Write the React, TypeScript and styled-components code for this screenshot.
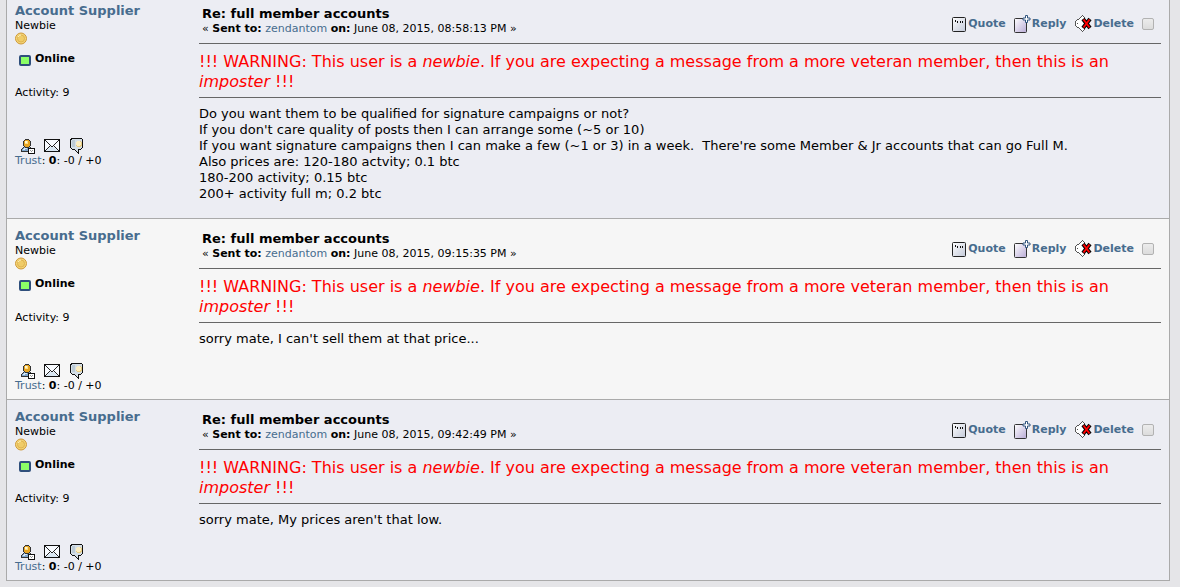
import React from 'react';
import styled, { createGlobalStyle } from 'styled-components';

const GlobalStyle = createGlobalStyle`
  body {
    margin: 0;
    background: #e5e5e8;
    color: #000;
    font-family: Verdana, "DejaVu Sans", sans-serif;
    font-size: 13px;
    line-height: 16px;
  }
`;

const Panel = styled.main`
  margin: 0 10px 6px 6px;
  border: solid #aaa;
  border-width: 0 1px;
`;

const Post = styled.article<{ $alt?: boolean }>`
  display: flex;
  padding: 8px 8px 7px;
  background: ${(p) => (p.$alt ? '#f6f6f6' : '#ecedf3')};
  border-bottom: 1px solid #aaa;
  &:first-child {
    padding-top: 2px;
  }
`;

const Poster = styled.aside`
  flex: 0 0 184px;
  display: flex;
  flex-direction: column;
  align-items: flex-start;
  padding-top: 1px;
  font-size: 11px;
  line-height: 13px;
`;

const Link = styled.a`
  color: #476c8e;
  text-decoration: none;
`;

const PosterName = styled(Link)`
  font-size: 13px;
  line-height: 16px;
  font-weight: bold;
`;

const Coin = styled.svg`
  display: block;
`;

const Status = styled.div`
  display: flex;
  align-items: flex-start;
  gap: 4px;
  margin-top: 7px;
  padding-left: 4px;
  font-weight: bold;
`;

const StatusLight = styled.span`
  box-sizing: border-box;
  width: 12px;
  height: 11px;
  margin-top: 3px;
  border: 2px solid #2f4f7c;
  border-radius: 2px;
  background: #8cff66;
`;

const Activity = styled.div`
  margin-top: 20px;
`;

const Contacts = styled.div`
  display: flex;
  align-items: center;
  gap: 9px;
  margin-top: 39px;
  padding-left: 6px;
  a,
  svg {
    display: block;
  }
`;

const Message = styled.section`
  flex: 1;
  min-width: 0;
`;

const Header = styled.header`
  display: flex;
  align-items: center;
  justify-content: space-between;
  height: 41px;
  padding: 0 7px 0 3px;
`;

const Title = styled.h2`
  margin: 0;
  font-size: 13px;
  line-height: 16px;
`;

const Sent = styled.div`
  font-size: 11px;
  line-height: 13px;
`;

const Heading = styled.div`
  padding-bottom: 5px;
`;

const Actions = styled.div`
  display: flex;
  align-items: center;
  padding-top: 2px;
`;

const Action = styled(Link)`
  display: flex;
  align-items: center;
  gap: 1px;
  margin-right: 8px;
  font-size: 11px;
  font-weight: bold;
  svg {
    display: block;
  }
`;

const Tick = styled.input`
  appearance: none;
  box-sizing: border-box;
  width: 12px;
  height: 12px;
  margin: 0;
  border: 1px solid #b2b2b2;
  border-radius: 2px;
  background: linear-gradient(#ececec, #dcdcdc);
`;

const Rule = styled.hr`
  height: 1px;
  margin: 0;
  border: 0;
  background: #666;
`;

const Warning = styled.p`
  margin: 8px 0 5px;
  color: #f00;
  font-size: 16px;
  line-height: 20px;
`;

const Body = styled.div`
  padding: 8px 0 9px;
  white-space: pre-wrap;
`;

const CoinIcon = () => (
  <Coin width="12" height="13" viewBox="0 0 12 13" aria-hidden="true">
    <circle cx="6" cy="6.500" r="5.500" fill="#f3d477" stroke="#cf9a3c" />
    <circle cx="6" cy="6.500" r="3.500" fill="#f0cc68" stroke="#e0b450" />
    <path d="M3 5Q4 3 6 3" fill="none" stroke="#fff3bd" />
  </Coin>
);

const ProfileIcon = () => (
  <svg width="14" height="16" viewBox="0 0 14 16" shapeRendering="crispEdges" aria-hidden="true">
    <path d="M4 1h4v1h1v1h1v5H9v1h1v1h1v1h1v3H0v-3h1v-1h1V9h1V8H2V3h1V2h1z" fill="#333" />
    <path d="M4 2h4v1h1v5H8v1H4V8H3V3h1z" fill="#e6a421" />
    <path d="M4 3h3v3H4z" fill="#ffdf86" />
    <path d="M4 3h2v2H4z" fill="#fff5cf" />
    <path d="M3 9h1v1h4V9h1v1h1v3H1v-2h1v-1h1z" fill="#7fa6cc" />
    <path d="M3 10h3v1H3zM2 11h2v1H2z" fill="#d6e7f5" />
    <path d="M7 10h7v6H7z" fill="#111" />
    <path d="M8 11h5v4H8z" fill="#fff" />
    <path d="M9 12h1v1H9zM11 12h1v1h-1zM10 13h1v1h-1z" fill="#999" />
  </svg>
);

const MailIcon = () => (
  <svg width="16" height="14" viewBox="0 0 16 14" aria-hidden="true">
    <rect x=".5" y=".5" width="15" height="12" fill="#f8fbff" stroke="#111" />
    <path d="M2 12h12l-4-4H6z" fill="#d8e6f2" />
    <path d="M1 1l7 7 7-7M1 12l5-5M15 12l-5-5" fill="none" stroke="#222" />
  </svg>
);

const ChatIcon = () => (
  <svg width="14" height="16" viewBox="0 0 14 16" shapeRendering="crispEdges" aria-hidden="true">
    <path d="M2 0h11v1h1v9h-1v1h-1v1h-2v4H9v-1H8v-1H7v-1H6v-1H3v-1H2v-1H1V1h1z" fill="#111" />
    <path d="M3 1h10v9h-1v1H9v3H8v-1H7v-1H6v-1H3v-1H2V2h1z" fill="#d5dfe7" />
    <path d="M3 2h3v7H3z" fill="#bccbd6" />
    <path d="M8 3h4v1h1v4h-1v1H8V8H7V4h1z" fill="#e8cd83" />
    <path d="M8 3h3v1h1v3h-1v1H8V7H7V4h1z" fill="#fbedc2" />
  </svg>
);

const QuoteIcon = () => (
  <svg width="16" height="18" viewBox="0 0 16 18" aria-hidden="true">
    <defs>
      <linearGradient id="quoteFill" x1="0" y1="0" x2="1" y2="1">
        <stop offset="0" stopColor="#fff" />
        <stop offset="1" stopColor="#c3c9d8" />
      </linearGradient>
    </defs>
    <rect x="1.500" y="2.500" width="13" height="14" rx="1" fill="url(#quoteFill)" stroke="#222" />
    <path d="M4 5h1v2H4zM6 6h1v2H6zM9 6h1v2H9zM11 6h1v2h-1z" fill="#111" shapeRendering="crispEdges" />
  </svg>
);

const ReplyIcon = () => (
  <svg width="17" height="18" viewBox="0 0 17 18" aria-hidden="true">
    <defs>
      <linearGradient id="replyFill" x1="0" y1="0" x2="1" y2="1">
        <stop offset="0" stopColor="#fff" />
        <stop offset="1" stopColor="#b9abd6" />
      </linearGradient>
    </defs>
    <rect x=".5" y="3.500" width="12" height="14" rx="1" fill="url(#replyFill)" stroke="#333" />
    <path d="M11.500.5h2v2.500h2.500v2h-2.500v2.500h-2v-2.500h-2.500v-2h2.500z" fill="#fff" stroke="#31557f" />
  </svg>
);

const DeleteIcon = () => (
  <svg width="18" height="18" viewBox="0 0 18 18" aria-hidden="true">
    <path d="M8.500.5l6 7-6 9.500-4-4.500-3-2v-4l3-2z" fill="#fff" />
    <path
      d="M8 0h1v1H8zM7 1h1v1H7zM6 2h1v1H6zM5 3h1v1H5zM3 4h2v1H3zM2 5h1v1H2zM1 6h1v5H1zM2 11h1v1H2zM3 12h2v1H3zM5 13h1v1H5zM6 14h1v1H6zM7 15h1v1H7zM8 16h1v1H8zM9 1h1v1H9zM10 2h1v1h-1zM9 15h1v1H9zM10 14h1v1h-1zM3 8h1v1H3z"
      fill="#555"
      shapeRendering="crispEdges"
    />
    <path d="M9 4l7 9M16 4l-7 9" stroke="#000" strokeWidth="4" />
    <path d="M9.500 4.500l6 8M15.500 4.500l-6 8" stroke="#f00" strokeWidth="2" />
  </svg>
);

interface PostData {
  time: string;
  body: string;
}

const posts: PostData[] = [
  {
    time: '08:58:13',
    body: `Do you want them to be qualified for signature campaigns or not?
If you don't care quality of posts then I can arrange some (~5 or 10)
If you want signature campaigns then I can make a few (~1 or 3) in a week.  There're some Member & Jr accounts that can go Full M.
Also prices are: 120-180 actvity; 0.1 btc
180-200 activity; 0.15 btc
200+ activity full m; 0.2 btc`,
  },
  { time: '09:15:35', body: "sorry mate, I can't sell them at that price..." },
  { time: '09:42:49', body: "sorry mate, My prices aren't that low." },
];

export default function App() {
  return (
    <>
      <GlobalStyle />
      <Panel>
        {posts.map((post, i) => (
          <Post key={post.time} $alt={i % 2 === 1}>
            <Poster>
              <PosterName href="#profile">Account Supplier</PosterName>
              <div>Newbie</div>
              <CoinIcon />
              <Status>
                <StatusLight />
                Online
              </Status>
              <Activity>Activity: 9</Activity>
              <Contacts>
                <a href="#profile" aria-label="View profile"><ProfileIcon /></a>
                <a href="#email" aria-label="Email"><MailIcon /></a>
                <a href="#message" aria-label="Personal message"><ChatIcon /></a>
              </Contacts>
              <div>
                <Link href="#trust">Trust</Link>: <b>0</b>: -0 / +0
              </div>
            </Poster>
            <Message>
              <Header>
                <Heading>
                  <Title>Re: full member accounts</Title>
                  <Sent>
                    « <b>Sent to:</b> <Link href="#zendantom">zendantom</Link> <b>on:</b> June 08, 2015, {post.time} PM »
                  </Sent>
                </Heading>
                <Actions>
                  <Action href="#quote"><QuoteIcon />Quote</Action>
                  <Action href="#reply"><ReplyIcon />Reply</Action>
                  <Action href="#delete"><DeleteIcon />Delete</Action>
                  <Tick type="checkbox" aria-label="Select message" />
                </Actions>
              </Header>
              <Rule />
              <Warning>
                !!! WARNING: This user is a <i>newbie</i>. If you are expecting a message from a more veteran member, then this is an <i>imposter</i> !!!
              </Warning>
              <Rule />
              <Body>{post.body}</Body>
            </Message>
          </Post>
        ))}
      </Panel>
    </>
  );
}
